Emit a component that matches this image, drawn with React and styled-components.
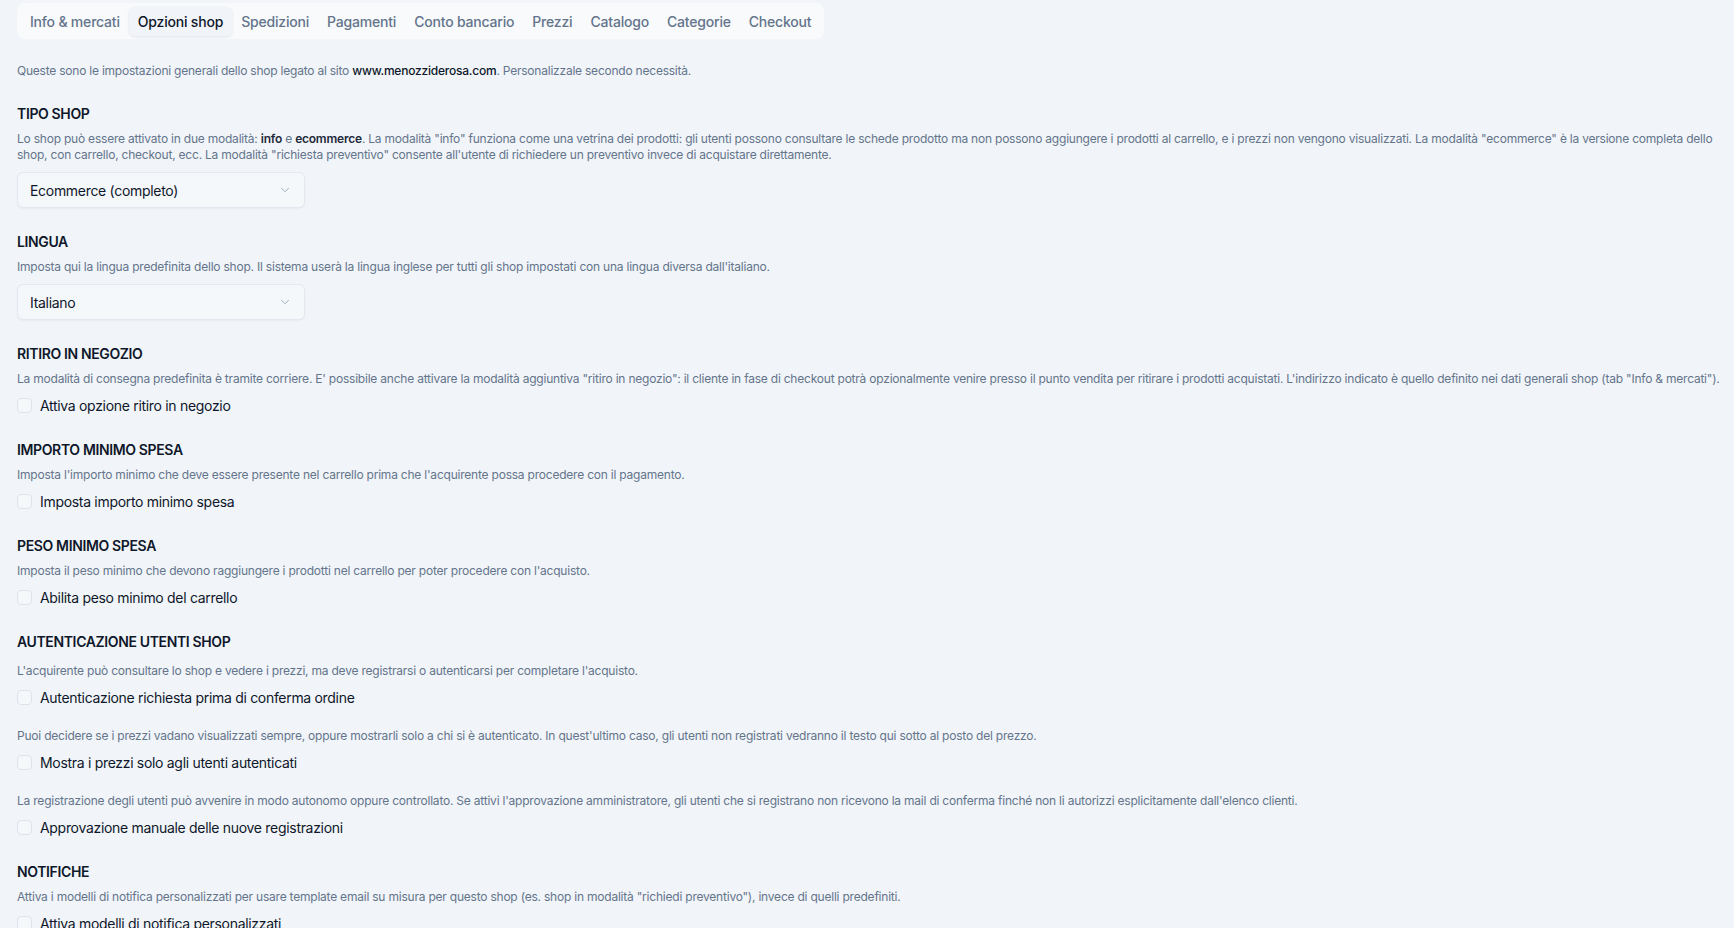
import React from 'react';
import styled, { createGlobalStyle } from 'styled-components';
import { ChevronDown } from 'lucide-react';

const GlobalStyle = createGlobalStyle`
  html, body {
    margin: 0;
    padding: 0;
    background: #f1f5f9;
    font-family: Inter, "Noto Sans", "Liberation Sans", sans-serif;
    letter-spacing: -0.014em;
    color: #0f172a;
  }
  * { box-sizing: border-box; }
`;

const tabs = ['Info & mercati', 'Opzioni shop', 'Spedizioni', 'Pagamenti', 'Conto bancario', 'Prezzi', 'Catalogo', 'Categorie', 'Checkout'];

const Page = styled.div`
  padding: 3px 10px 40px 17px;
`;

const TabBar = styled.div`
  display: inline-flex;
  align-items: center;
  height: 36px;
  padding: 0 4px;
  background: #f8fafc;
  border-radius: 8px;
`;

const Tab = styled.div`
  height: 29px;
  display: flex;
  align-items: center;
  padding: 0 9px;
  font-size: 14px;
  font-weight: 500;
  letter-spacing: -0.014em;
  border-radius: 6px;
  cursor: pointer;
  color: ${(p) => (p.$active ? '#0f172a' : '#64748b')};
  background: ${(p) => (p.$active ? '#f1f5f9' : 'transparent')};
  box-shadow: ${(p) => (p.$active ? '0 1px 3px rgba(15, 23, 42, 0.10)' : 'none')};
`;

const Intro = styled.p`
  margin: 24px 0 0;
  font-size: 12px;
  line-height: 16px;
  color: #64748b;

  strong {
    font-weight: 500;
    color: #0f172a;
  }
`;

const Section = styled.section`
  margin-top: ${(p) => p.$top || 24}px;
`;

const Heading = styled.h3`
  margin: 0;
  font-size: 14px;
  line-height: 20px;
  font-weight: 600;
  letter-spacing: -0.026em;
  text-transform: uppercase;
  color: #0f172a;
`;

const Desc = styled.p`
  margin: ${(p) => p.$top ?? 7}px 0 0;
  font-size: 12px;
  line-height: 16px;
  letter-spacing: -0.018em;
  color: #64748b;

  b {
    font-weight: 600;
    color: #1e293b;
  }
`;

const SelectBox = styled.div`
  margin-top: 9px;
  width: 288px;
  height: 36px;
  display: flex;
  align-items: center;
  justify-content: space-between;
  padding: 0 12px;
  background: #f5f8fb;
  border: 1px solid #e2e8f0;
  border-radius: 6px;
  box-shadow: 0 1px 2px rgba(15, 23, 42, 0.04);
  font-size: 14px;
  letter-spacing: -0.022em;
  color: #0f172a;
  cursor: pointer;

  svg {
    color: #94a3b8;
  }
`;

const CheckRow = styled.label`
  margin-top: 8px;
  display: flex;
  align-items: center;
  gap: 8px;
  height: 20px;
  font-size: 14px;
  letter-spacing: -0.022em;
  color: #0f172a;
  cursor: pointer;
`;

const Box = styled.span`
  width: 15px;
  height: 15px;
  border: 1px solid #dde3ea;
  border-radius: 4px;
  background: #f5f8fb;
  flex-shrink: 0;
`;

const SubBlock = styled.div`
  margin-top: ${(p) => p.$top || 0}px;
`;

const Select = ({ value }) => (
  <SelectBox>
    <span>{value}</span>
    <ChevronDown size={14} strokeWidth={1.5} />
  </SelectBox>
);

const Check = ({ label }) => (
  <CheckRow>
    <Box />
    {label}
  </CheckRow>
);

export default function App() {
  return (
    <Page>
      <GlobalStyle />
      <TabBar>
        {tabs.map((t) => (
          <Tab key={t} $active={t === 'Opzioni shop'}>{t}</Tab>
        ))}
      </TabBar>

      <Intro>
        Queste sono le impostazioni generali dello shop legato al sito <strong>www.menozziderosa.com</strong>. Personalizzale secondo necessità.
      </Intro>

      <Section $top={25}>
        <Heading>Tipo shop</Heading>
        <Desc>
          Lo shop può essere attivato in due modalità: <b>info</b> e <b>ecommerce</b>. La modalità "info" funziona come una vetrina dei prodotti: gli utenti possono consultare le schede prodotto ma non possono aggiungere i prodotti al carrello, e i prezzi non vengono visualizzati. La modalità "ecommerce" è la versione completa dello shop, con carrello, checkout, ecc. La modalità "richiesta preventivo" consente all'utente di richiedere un preventivo invece di acquistare direttamente.
        </Desc>
        <Select value="Ecommerce (completo)" />
      </Section>

      <Section>
        <Heading>Lingua</Heading>
        <Desc>Imposta qui la lingua predefinita dello shop. Il sistema userà la lingua inglese per tutti gli shop impostati con una lingua diversa dall'italiano.</Desc>
        <Select value="Italiano" />
      </Section>

      <Section>
        <Heading>Ritiro in negozio</Heading>
        <Desc>La modalità di consegna predefinita è tramite corriere. E' possibile anche attivare la modalità aggiuntiva "ritiro in negozio": il cliente in fase di checkout potrà opzionalmente venire presso il punto vendita per ritirare i prodotti acquistati. L'indirizzo indicato è quello definito nei dati generali shop (tab "Info &amp; mercati").</Desc>
        <Check label="Attiva opzione ritiro in negozio" />
      </Section>

      <Section $top={25}>
        <Heading>Importo minimo spesa</Heading>
        <Desc>Imposta l'importo minimo che deve essere presente nel carrello prima che l'acquirente possa procedere con il pagamento.</Desc>
        <Check label="Imposta importo minimo spesa" />
      </Section>

      <Section $top={25}>
        <Heading>Peso minimo spesa</Heading>
        <Desc>Imposta il peso minimo che devono raggiungere i prodotti nel carrello per poter procedere con l'acquisto.</Desc>
        <Check label="Abilita peso minimo del carrello" />
      </Section>

      <Section $top={25}>
        <Heading>Autenticazione utenti shop</Heading>
        <SubBlock $top={11}>
          <Desc $top={0}>L'acquirente può consultare lo shop e vedere i prezzi, ma deve registrarsi o autenticarsi per completare l'acquisto.</Desc>
          <Check label="Autenticazione richiesta prima di conferma ordine" />
        </SubBlock>
        <SubBlock $top={21}>
          <Desc $top={0}>Puoi decidere se i prezzi vadano visualizzati sempre, oppure mostrarli solo a chi si è autenticato. In quest'ultimo caso, gli utenti non registrati vedranno il testo qui sotto al posto del prezzo.</Desc>
          <Check label="Mostra i prezzi solo agli utenti autenticati" />
        </SubBlock>
        <SubBlock $top={21}>
          <Desc $top={0}>La registrazione degli utenti può avvenire in modo autonomo oppure controllato. Se attivi l'approvazione amministratore, gli utenti che si registrano non ricevono la mail di conferma finché non li autorizzi esplicitamente dall'elenco clienti.</Desc>
          <Check label="Approvazione manuale delle nuove registrazioni" />
        </SubBlock>
      </Section>

      <Section $top={25}>
        <Heading>Notifiche</Heading>
        <Desc>Attiva i modelli di notifica personalizzati per usare template email su misura per questo shop (es. shop in modalità "richiedi preventivo"), invece di quelli predefiniti.</Desc>
        <Check label="Attiva modelli di notifica personalizzati" />
      </Section>
    </Page>
  );
}
